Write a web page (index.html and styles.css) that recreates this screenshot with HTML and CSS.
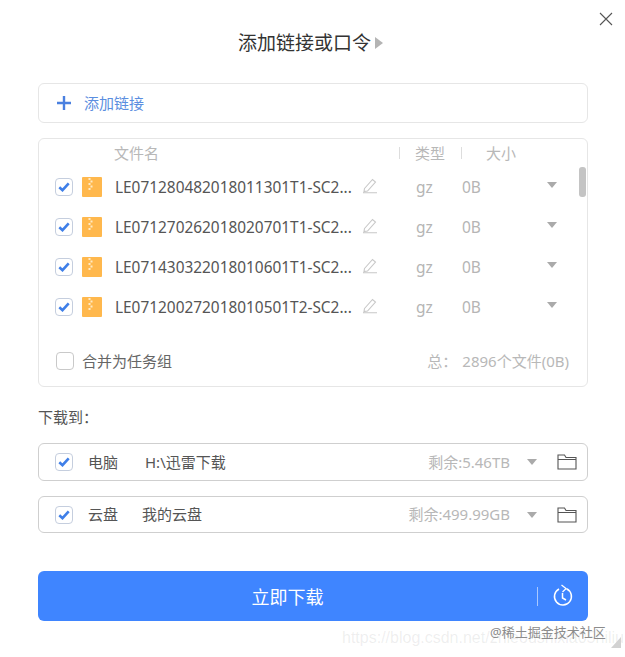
FILE: index.html
```html
<!DOCTYPE html>
<html lang="zh-CN">
<head>
<meta charset="utf-8">
<title>添加链接或口令</title>
<link rel="stylesheet" href="styles.css">
</head>
<body>
<main class="dialog">
  <button class="close" aria-label="关闭">
    <svg width="14" height="14" viewBox="0 0 14 14"><path d="M1 1l12 12M13 1L1 13" stroke="#555" stroke-width="1.1" fill="none"/></svg>
  </button>
  <header class="title-row">
    <h1 class="title">添加链接或口令</h1>
    <svg class="title-arrow" width="10" height="14" viewBox="0 0 10 14"><path d="M1 1l8 6-8 6z" fill="#b4b4b4"/></svg>
  </header>

  <section class="add-link">
    <svg width="14" height="14" viewBox="0 0 14 14"><path d="M7 0v14M0 7h14" stroke="#4a80e0" stroke-width="2.4" fill="none"/></svg>
    <span class="raise">添加链接</span>
  </section>

  <section class="files">
    <div class="files-head">
      <span class="head-name">文件名</span>
      <i class="head-sep sep-a"></i>
      <span class="head-type">类型</span>
      <i class="head-sep sep-b"></i>
      <span class="head-size">大小</span>
    </div>

    <div class="file-row">
      <span class="check on"><svg width="12" height="10" viewBox="0 0 12 10"><path d="M1.3 5.2l3.2 3 6.2-6.8" stroke="#3f7fe8" stroke-width="2.6" fill="none"/></svg></span>
      <svg class="zip" width="20" height="20" viewBox="0 0 20 20"><rect width="20" height="20" rx="1" fill="#ffb84d"/><path d="M6.500 1h2v2h-2zM8.500 3.500h2v2h-2zM6.500 6h2v2h-2zM8.500 8.500h2v2h-2zM6.500 11h2v2h-2z" fill="#ffe9c4"/></svg>
      <span class="name">LE071280482018011301T1-SC2...</span>
      <svg class="pencil" width="16" height="17" viewBox="0 0 16 17"><path d="M2.500 11.500L10.500 2.500l3 2.500-8 9-3.500.5zM1 15.800h14" stroke="#c8c8c8" stroke-width="1.1" fill="none"/></svg>
      <span class="type">gz</span>
      <span class="size">0B</span>
      <i class="caret"></i>
    </div>
    <div class="file-row">
      <span class="check on"><svg width="12" height="10" viewBox="0 0 12 10"><path d="M1.3 5.2l3.2 3 6.2-6.8" stroke="#3f7fe8" stroke-width="2.6" fill="none"/></svg></span>
      <svg class="zip" width="20" height="20" viewBox="0 0 20 20"><rect width="20" height="20" rx="1" fill="#ffb84d"/><path d="M6.500 1h2v2h-2zM8.500 3.500h2v2h-2zM6.500 6h2v2h-2zM8.500 8.500h2v2h-2zM6.500 11h2v2h-2z" fill="#ffe9c4"/></svg>
      <span class="name">LE071270262018020701T1-SC2...</span>
      <svg class="pencil" width="16" height="17" viewBox="0 0 16 17"><path d="M2.500 11.500L10.500 2.500l3 2.500-8 9-3.500.5zM1 15.800h14" stroke="#c8c8c8" stroke-width="1.1" fill="none"/></svg>
      <span class="type">gz</span>
      <span class="size">0B</span>
      <i class="caret"></i>
    </div>
    <div class="file-row">
      <span class="check on"><svg width="12" height="10" viewBox="0 0 12 10"><path d="M1.3 5.2l3.2 3 6.2-6.8" stroke="#3f7fe8" stroke-width="2.6" fill="none"/></svg></span>
      <svg class="zip" width="20" height="20" viewBox="0 0 20 20"><rect width="20" height="20" rx="1" fill="#ffb84d"/><path d="M6.500 1h2v2h-2zM8.500 3.500h2v2h-2zM6.500 6h2v2h-2zM8.500 8.500h2v2h-2zM6.500 11h2v2h-2z" fill="#ffe9c4"/></svg>
      <span class="name">LE071430322018010601T1-SC2...</span>
      <svg class="pencil" width="16" height="17" viewBox="0 0 16 17"><path d="M2.500 11.500L10.500 2.500l3 2.500-8 9-3.500.5zM1 15.800h14" stroke="#c8c8c8" stroke-width="1.1" fill="none"/></svg>
      <span class="type">gz</span>
      <span class="size">0B</span>
      <i class="caret"></i>
    </div>
    <div class="file-row">
      <span class="check on"><svg width="12" height="10" viewBox="0 0 12 10"><path d="M1.3 5.2l3.2 3 6.2-6.8" stroke="#3f7fe8" stroke-width="2.6" fill="none"/></svg></span>
      <svg class="zip" width="20" height="20" viewBox="0 0 20 20"><rect width="20" height="20" rx="1" fill="#ffb84d"/><path d="M6.500 1h2v2h-2zM8.500 3.500h2v2h-2zM6.500 6h2v2h-2zM8.500 8.500h2v2h-2zM6.500 11h2v2h-2z" fill="#ffe9c4"/></svg>
      <span class="name">LE071200272018010501T2-SC2...</span>
      <svg class="pencil" width="16" height="17" viewBox="0 0 16 17"><path d="M2.500 11.500L10.500 2.500l3 2.500-8 9-3.500.5zM1 15.800h14" stroke="#c8c8c8" stroke-width="1.1" fill="none"/></svg>
      <span class="type">gz</span>
      <span class="size">0B</span>
      <i class="caret"></i>
    </div>

    <div class="files-foot">
      <span class="check"></span>
      <span class="merge raise">合并为任务组</span>
      <span class="total raise">总：</span>
      <span class="total-count raise">2896个文件(0B)</span>
    </div>
    <i class="scrollbar"></i>
  </section>

  <p class="save-label">下载到：</p>

  <section class="dest dest-pc">
    <span class="check on"><svg width="12" height="10" viewBox="0 0 12 10"><path d="M1.3 5.2l3.2 3 6.2-6.8" stroke="#3f7fe8" stroke-width="2.6" fill="none"/></svg></span>
    <span class="dest-name raise">电脑</span>
    <span class="dest-path raise">H:\迅雷下载</span>
    <span class="free raise">剩余:5.46TB</span>
    <i class="caret"></i>
    <svg class="folder" width="20" height="16" viewBox="0 0 20 16"><path d="M1 15V1h6.500l1.500 2.500h10V15zM1 5.500h18" stroke="#555" stroke-width="1.100" fill="none"/></svg>
  </section>
  <section class="dest dest-cloud">
    <span class="check on"><svg width="12" height="10" viewBox="0 0 12 10"><path d="M1.3 5.2l3.2 3 6.2-6.8" stroke="#3f7fe8" stroke-width="2.6" fill="none"/></svg></span>
    <span class="dest-name raise">云盘</span>
    <span class="dest-path raise">我的云盘</span>
    <span class="free raise">剩余:499.99GB</span>
    <i class="caret"></i>
    <svg class="folder" width="20" height="16" viewBox="0 0 20 16"><path d="M1 15V1h6.500l1.500 2.500h10V15zM1 5.500h18" stroke="#555" stroke-width="1.100" fill="none"/></svg>
  </section>

  <div class="download">
    <span class="download-label">立即下载</span>
    <span class="download-side">
      <svg width="22" height="24" viewBox="0 0 22 24"><path d="M7 5A8.500 8.500 0 1 0 14.500 4.800" stroke="#fff" stroke-width="1.500" fill="none"/><path d="M9.500 1l4.500 3.600L10.500 8" stroke="#fff" stroke-width="1.300" fill="none"/><path d="M10.500 9v5l3.500 2" stroke="#fff" stroke-width="1.500" fill="none"/></svg>
    </span>
  </div>
</main>

<span class="mark-url">https://blog.csdn.net/zhieoushixia05hiliu</span>
<span class="mark-site">@稀土掘金技术社区</span>
<i class="resize-handle"></i>
</body>
</html>
```

FILE: styles.css
```css
* { box-sizing: border-box; }
html, body { margin: 0; padding: 0; }
body {
  width: 625px;
  height: 657px;
  overflow: hidden;
  position: relative;
  background: #fff;
  color: #444;
  font-family: "Noto Sans", "Noto Sans CJK SC", sans-serif;
  font-size: 15px;
}
.dialog {
  padding: 28px 37px 0 38px;
  display: flex;
  flex-direction: column;
}
.close {
  position: absolute;
  top: 12px;
  right: 12px;
  width: 14px;
  height: 14px;
  padding: 0;
  border: 0;
  background: none;
  display: block;
}
.close svg { display: block; }
.title-row {
  height: 30px;
  margin-bottom: 25px;
  display: flex;
  align-items: center;
  justify-content: center;
  gap: 3px;
  padding-right: 4px;
}
.title {
  margin: 0;
  font-size: 19px;
  font-weight: 400;
  line-height: 30px;
  color: #333;
}
.raise { padding-bottom: 2px; }
.add-link {
  height: 40px;
  border: 1px solid #e6e6e6;
  border-radius: 6px;
  padding-left: 18px;
  display: flex;
  align-items: center;
  gap: 13px;
  color: #5b8ee0;
  font-size: 15px;
  flex: none;
}
.add-link svg { flex: none; }
.files {
  margin-top: 15px;
  height: 249px;
  border: 1px solid #e6e6e6;
  border-radius: 6px;
  position: relative;
  flex: none;
}
.files-head {
  height: 28px;
  display: flex;
  align-items: center;
  color: #b8b8b8;
  line-height: 28px;
}
.head-name { margin-left: 75px; width: 285px; }
.head-sep { width: 1px; height: 12px; background: #ddd; }
.head-type { margin-left: 15px; width: 46px; }
.head-size { margin-left: 24px; }
.file-row {
  height: 40px;
  padding-left: 16px;
  display: grid;
  grid-template-columns: 27px 33px 247px 54px 46px 85px 10px;
  align-items: center;
}
.check {
  width: 18px;
  height: 18px;
  border: 1px solid #c9c9c9;
  border-radius: 4px;
  background: #fff;
  display: flex;
  align-items: center;
  justify-content: center;
  flex: none;
}
.on { border-color: #c5cede; }
.zip { display: block; }
.name {
  color: #555;
  font-size: 15.400px;
  white-space: nowrap;
}
.pencil { display: block; margin-top: -3px; }
.type, .size { color: #b5b5b5; font-size: 15.500px; }
.caret {
  display: block;
  width: 0;
  height: 0;
  border-left: 5px solid transparent;
  border-right: 5px solid transparent;
  border-top: 6px solid #aaa;
  flex: none;
}
.file-row .caret { margin-top: -5px; }
.files-foot {
  margin-top: 20px;
  height: 28px;
  padding: 0 18px 0 17px;
  display: flex;
  align-items: center;
}
.merge { margin-left: 8px; color: #666; }
.total { margin-left: auto; color: #b8b8b8; }
.total-count { margin-left: 5px; color: #b8b8b8; font-size: 15px; }
.scrollbar {
  position: absolute;
  top: 28px;
  right: 1px;
  width: 7px;
  height: 30px;
  border-radius: 3px;
  background: #c4c4c4;
}
.save-label {
  margin: 20px 0 16px;
  height: 20px;
  line-height: 20px;
  color: #555;
  font-size: 15px;
}
.dest {
  border: 1px solid #cfcfcf;
  border-radius: 6px;
  padding: 0 10px 0 16px;
  display: flex;
  align-items: center;
  flex: none;
}
.dest-pc { height: 38px; }
.dest-cloud { height: 37px; margin-top: 15px; }
.dest-name { margin-left: 15px; color: #555; width: 30px; }
.dest-path { color: #555; }
.dest-pc .dest-path { margin-left: 27px; }
.dest-cloud .dest-path { margin-left: 24px; }
.free { margin-left: auto; color: #b8b8b8; font-size: 15px; }
.dest .caret { margin-left: 17px; }
.folder { display: block; margin-left: 20px; flex: none; }
.download {
  margin-top: 38px;
  height: 50px;
  border-radius: 6px;
  background: #3f85ff;
  display: flex;
  align-items: center;
  color: #fff;
  flex: none;
}
.download-label {
  flex: 1;
  text-align: center;
  font-size: 18px;
}
.download-side {
  width: 51px;
  height: 19px;
  border-left: 1px solid #a9c8ff;
  display: flex;
  align-items: center;
  justify-content: center;
}
.download-side svg { display: block; flex: none; }
.mark-url {
  position: absolute;
  left: 342px;
  top: 628px;
  font-family: "Liberation Sans", sans-serif;
  font-size: 16px;
  line-height: 20px;
  color: rgba(120, 120, 120, .13);
  white-space: nowrap;
}
.mark-site {
  position: absolute;
  left: 490px;
  top: 622px;
  font-size: 13px;
  line-height: 20px;
  color: #8c8c8c;
  white-space: nowrap;
}
.resize-handle {
  position: absolute;
  left: 611px;
  top: 637px;
  width: 0;
  height: 0;
  border-left: 10px solid transparent;
  border-bottom: 11px solid #d2d2d2;
}
```
